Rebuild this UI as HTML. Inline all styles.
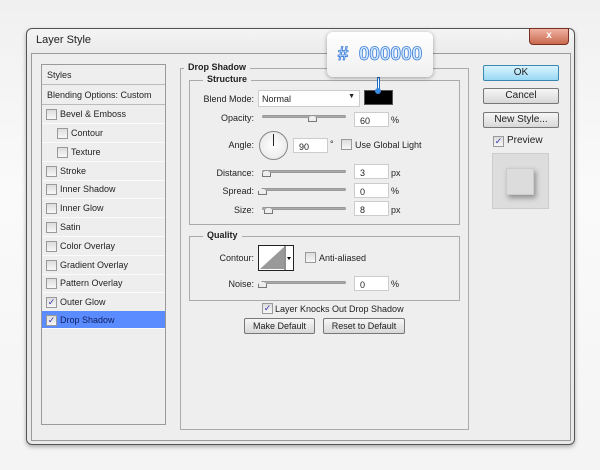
<!DOCTYPE html><html><head><style>
*{box-sizing:border-box;margin:0;padding:0}
body{width:600px;height:470px;background:linear-gradient(#f0f0f0,#fafafa 40%,#f4f4f4);font-family:"Liberation Sans",sans-serif;font-size:9px;color:#222;position:relative;overflow:hidden}
.a{position:absolute}
.dlg{left:26px;top:28px;width:549px;height:417px;border:1px solid #555;border-radius:6px;background:linear-gradient(#f4f4f4,#e9e9e9 30px);box-shadow:0 2px 4px rgba(0,0,0,.3)}
.inner{left:31px;top:53px;width:540px;height:388px;border:1px solid #9a9a9a;background:#eeeeee}
.list{left:41px;top:64px;width:125px;height:361px;border:1px solid #9a9a9a;background:#eeeeee}
.row{position:absolute;left:0;width:123px;height:19px;border-bottom:1px solid #fafafa;line-height:18px;font-size:9px}
.cb{position:absolute;width:11px;height:11px;border:1px solid #999;background:linear-gradient(#ddd,#f8f8f8)}
.grp{border:1px solid #aaa}
.lbl{position:absolute;font-size:9px;text-align:right}
.inp{position:absolute;width:35px;height:15px;background:#fff;border:1px solid #ccc;font-size:9px;padding:3px 5px}
.sl{position:absolute;height:3px;background:#aaa;border-radius:2px;border:1px solid #999}
.th{position:absolute;width:9px;height:7px;border:1px solid #777;background:#eee;clip-path:polygon(50% 0,100% 45%,100% 100%,0 100%,0 45%)}
.btn{position:absolute;height:16px;border:1px solid #777;border-radius:2px;background:linear-gradient(#f6f6f6,#d8d8d8);text-align:center;line-height:14px;font-size:10px}
b{font-weight:bold}
</style></head><body>
<div class="a dlg"></div>
<div class="a" style="left:36px;top:34px;font-size:11px">Layer Style</div>
<div class="a" style="left:529px;top:28px;width:40px;height:17px;border-radius:0 0 4px 4px;background:linear-gradient(#f0b0a0,#c86a50);border:1px solid #7a3020;color:#fff;text-align:center;font-weight:bold;font-size:10px;line-height:14px">x</div>
<div class="a inner"></div>
<div class="a list">
 <div class="row" style="top:0;height:20px;padding-left:5px;line-height:20px;border-bottom:1px solid #bbb">Styles</div>
 <div class="row" style="top:20px;height:20px;padding-left:5px;line-height:20px;border-bottom:1px solid #bbb">Blending Options: Custom</div>
 <div class="row" style="top:40px;padding-left:18px"><span class="cb" style="left:4px;top:4px"></span>Bevel &amp; Emboss</div>
 <div class="row" style="top:59px;padding-left:29px"><span class="cb" style="left:15px;top:4px"></span>Contour</div>
 <div class="row" style="top:78px;padding-left:29px"><span class="cb" style="left:15px;top:4px"></span>Texture</div>
 <div class="row" style="top:97px;padding-left:18px"><span class="cb" style="left:4px;top:4px"></span>Stroke</div>
 <div class="row" style="top:115px;padding-left:18px"><span class="cb" style="left:4px;top:4px"></span>Inner Shadow</div>
 <div class="row" style="top:134px;padding-left:18px"><span class="cb" style="left:4px;top:4px"></span>Inner Glow</div>
 <div class="row" style="top:153px;padding-left:18px"><span class="cb" style="left:4px;top:4px"></span>Satin</div>
 <div class="row" style="top:172px;padding-left:18px"><span class="cb" style="left:4px;top:4px"></span>Color Overlay</div>
 <div class="row" style="top:191px;padding-left:18px"><span class="cb" style="left:4px;top:4px"></span>Gradient Overlay</div>
 <div class="row" style="top:209px;padding-left:18px"><span class="cb" style="left:4px;top:4px"></span>Pattern Overlay</div>
 <div class="row" style="top:228px;padding-left:18px"><span class="cb" style="left:4px;top:4px;font-size:9px;line-height:9px;color:#33a;text-align:center">✓</span>Outer Glow</div>
 <div class="row" style="top:246px;padding-left:18px;background:#5b8cff;color:#102060;height:18px"><span class="cb" style="left:4px;top:4px;font-size:9px;line-height:9px;color:#33a;text-align:center">✓</span>Drop Shadow</div>
</div>
<div class="a grp" style="left:180px;top:68px;width:289px;height:362px"></div>
<div class="a" style="left:184px;top:62px;background:#eee;padding:0 4px"><b>Drop Shadow</b></div>
<div class="a grp" style="left:189px;top:80px;width:271px;height:145px"></div>
<div class="a" style="left:203px;top:74px;background:#eee;padding:0 4px"><b>Structure</b></div>
<div class="lbl" style="left:190px;width:64px;top:94px">Blend Mode:</div>
<div class="a" style="left:258px;top:90px;width:102px;height:17px;background:#fff;border:1px solid #ccc;padding:3px 3px;font-size:9px">Normal<span style="position:absolute;right:4px;top:2px;font-size:7px">▼</span></div>
<div class="a" style="left:364px;top:90px;width:29px;height:15px;background:#000;border:1px solid #555"></div>
<div class="a" style="left:377px;top:77px;width:3px;height:13px;border:1px solid #1a70c8;background:#fff"></div>
<div class="a" style="left:375px;top:88px;width:6px;height:6px;border-radius:50%;background:#3a8ae0"></div>
<div class="a" style="left:327px;top:32px;width:106px;height:45px;border-radius:6px;background:linear-gradient(#fff,#f0f0f0);box-shadow:0 1px 4px rgba(0,0,0,.35);text-align:center;line-height:45px;font-size:19px;font-weight:bold;color:#d4ebff;-webkit-text-stroke:0.8px #3a7ad8">#&nbsp;&nbsp;000000</div>
<div class="lbl" style="left:190px;width:64px;top:113px">Opacity:</div>
<div class="sl" style="left:262px;top:115px;width:84px"></div><div class="th" style="left:308px;top:115px"></div>
<div class="inp" style="left:354px;top:112px">60</div><div class="a" style="left:391px;top:115px">%</div>
<div class="lbl" style="left:190px;width:64px;top:140px">Angle:</div>
<div class="a" style="left:259px;top:131px;width:29px;height:29px;border-radius:50%;border:1px solid #888;background:radial-gradient(#fff,#e4e4e4)"></div>
<div class="a" style="left:273px;top:134px;width:1px;height:12px;background:#222"></div>
<div class="inp" style="left:293px;top:138px">90</div><div class="a" style="left:330px;top:139px">°</div>
<span class="cb" style="left:341px;top:139px"></span><div class="a" style="left:355px;top:140px">Use Global Light</div>
<div class="lbl" style="left:190px;width:64px;top:168px">Distance:</div>
<div class="sl" style="left:262px;top:170px;width:84px"></div><div class="th" style="left:262px;top:170px"></div>
<div class="inp" style="left:354px;top:164px">3</div><div class="a" style="left:391px;top:168px">px</div>
<div class="lbl" style="left:190px;width:64px;top:186px">Spread:</div>
<div class="sl" style="left:262px;top:188px;width:84px"></div><div class="th" style="left:258px;top:188px"></div>
<div class="inp" style="left:354px;top:183px">0</div><div class="a" style="left:391px;top:186px">%</div>
<div class="lbl" style="left:190px;width:64px;top:205px">Size:</div>
<div class="sl" style="left:262px;top:207px;width:84px"></div><div class="th" style="left:264px;top:207px"></div>
<div class="inp" style="left:354px;top:201px">8</div><div class="a" style="left:391px;top:205px">px</div>
<div class="a grp" style="left:189px;top:236px;width:271px;height:65px"></div>
<div class="a" style="left:203px;top:230px;background:#eee;padding:0 4px"><b>Quality</b></div>
<div class="lbl" style="left:190px;width:64px;top:253px">Contour:</div>
<div class="a" style="left:258px;top:245px;width:36px;height:26px;border:1px solid #222;background:#fff"></div>
<svg class="a" style="left:259px;top:246px" width="34" height="24"><polygon points="1,23 25,1 25,23" fill="#999"/><line x1="26" y1="0" x2="26" y2="24" stroke="#222"/><polygon points="28,11 32,11 30,14" fill="#000"/></svg>
<span class="cb" style="left:305px;top:252px"></span><div class="a" style="left:319px;top:253px">Anti-aliased</div>
<div class="lbl" style="left:190px;width:64px;top:279px">Noise:</div>
<div class="sl" style="left:262px;top:281px;width:84px"></div><div class="th" style="left:258px;top:281px"></div>
<div class="inp" style="left:354px;top:276px">0</div><div class="a" style="left:391px;top:279px">%</div>
<span class="cb" style="left:262px;top:303px;font-size:9px;line-height:9px;color:#33a;text-align:center">✓</span><div class="a" style="left:275px;top:304px">Layer Knocks Out Drop Shadow</div>
<div class="btn" style="left:244px;top:318px;width:71px;font-size:9px">Make Default</div>
<div class="btn" style="left:323px;top:318px;width:82px;font-size:9px">Reset to Default</div>
<div class="btn" style="left:483px;top:65px;width:76px;background:linear-gradient(#d8f4ff,#9ad8f4);border-color:#3a88b0">OK</div>
<div class="btn" style="left:483px;top:88px;width:76px">Cancel</div>
<div class="btn" style="left:483px;top:112px;width:76px">New Style...</div>
<span class="cb" style="left:493px;top:136px;font-size:9px;line-height:9px;color:#33a;text-align:center">✓</span><div class="a" style="left:507px;top:135px;font-size:10px">Preview</div>
<div class="a" style="left:492px;top:153px;width:57px;height:56px;border:1px solid #ccc;background:#ddd"></div>
<div class="a" style="left:506px;top:168px;width:28px;height:27px;background:#dcdcdc;border:1px solid #ccc;box-shadow:2px 3px 5px rgba(0,0,0,.35)"></div>
</body></html>
